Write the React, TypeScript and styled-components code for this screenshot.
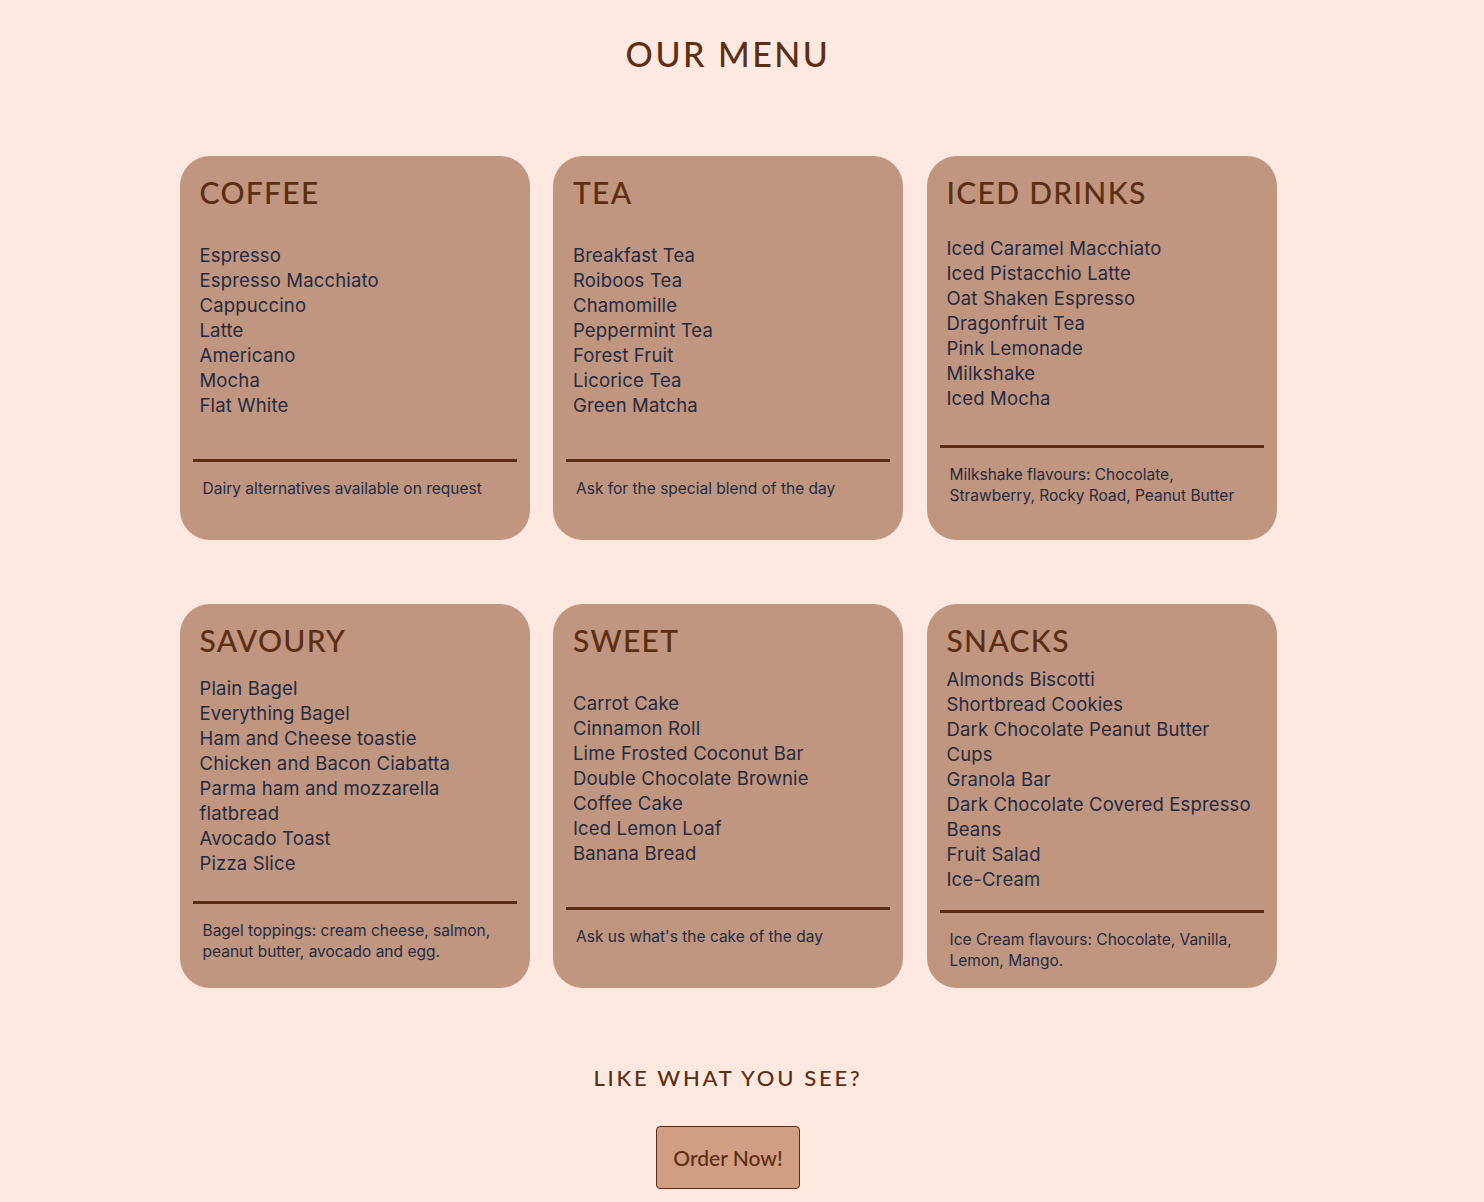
import React from "react";
import styled, { createGlobalStyle } from "styled-components";

const GlobalStyle = createGlobalStyle`
  html, body {
    background: #fde9df;
  }
  body {
    margin: 8px;
    font-family: "Inter", "Liberation Sans", sans-serif;
  }
  * { box-sizing: border-box; }
`;

const Page = styled.main`
  width: 1440px;
  display: flex;
  flex-direction: column;
  align-items: center;
`;

const Title = styled.h1`
  margin: 29px 0 0;
  font-family: "Lato", "Liberation Sans", sans-serif;
  font-weight: 500;
  font-size: 34px;
  line-height: 1;
  letter-spacing: 2.5px;
  color: #5c2e12;
`;

const Grid = styled.section`
  margin-top: 85px;
  display: grid;
  grid-template-columns: repeat(3, 350px);
  grid-auto-rows: 384px;
  column-gap: 23.5px;
  row-gap: 64px;
`;

const Card = styled.article`
  display: flex;
  flex-direction: column;
  height: 384px;
  padding: 0 13px;
  background: #c09680;
  border-radius: 30px;
`;

const CardTitle = styled.h2`
  margin: 0;
  height: 46px;
  padding: 21px 0 0 7px;
  font-family: "Lato", "Liberation Sans", sans-serif;
  font-weight: 500;
  font-size: 30px;
  line-height: 1;
  letter-spacing: 1.3px;
  color: #5c2e12;
`;

const CardBody = styled.div`
  flex: 1;
  display: flex;
  flex-direction: column;
  justify-content: space-evenly;
`;

const ItemList = styled.ul`
  margin: 0;
  padding: 0 10px 0 7px;
  list-style: none;
`;

const Item = styled.li`
  font-size: 18.5px;
  line-height: 25px;
  letter-spacing: 0.15px;
  color: #262a3f;
`;

const Bottom = styled.div`
  display: flex;
  flex-direction: column;
`;

const Divider = styled.hr`
  margin: 0;
  border: none;
  height: 3px;
  background: #5a2d13;
`;

const Note = styled.p`
  margin: 16px 0 0;
  padding: 0 10px;
  font-size: 15.5px;
  line-height: 21px;
  color: #262a3f;
`;

const Cta = styled.h3`
  margin: 79px 0 0;
  font-family: "Lato", "Liberation Sans", sans-serif;
  font-weight: 500;
  font-size: 22px;
  line-height: 1;
  letter-spacing: 2.7px;
  color: #5c2e12;
`;

const OrderButton = styled.button`
  margin-top: 37px;
  width: 144px;
  height: 63px;
  background: #d19e83;
  border: 1px solid #5c2e12;
  border-radius: 4px;
  font-family: "Lato", "Liberation Sans", sans-serif;
  font-size: 21px;
  font-weight: 500;
  color: #5c2e12;
  cursor: pointer;
`;

type Section = { title: string; items: string[]; note: string };

const sections: Section[] = [
  {
    title: "COFFEE",
    items: ["Espresso", "Espresso Macchiato", "Cappuccino", "Latte", "Americano", "Mocha", "Flat White"],
    note: "Dairy alternatives available on request",
  },
  {
    title: "TEA",
    items: ["Breakfast Tea", "Roiboos Tea", "Chamomille", "Peppermint Tea", "Forest Fruit", "Licorice Tea", "Green Matcha"],
    note: "Ask for the special blend of the day",
  },
  {
    title: "ICED DRINKS",
    items: [
      "Iced Caramel Macchiato",
      "Iced Pistacchio Latte",
      "Oat Shaken Espresso",
      "Dragonfruit Tea",
      "Pink Lemonade",
      "Milkshake",
      "Iced Mocha",
    ],
    note: "Milkshake flavours: Chocolate, Strawberry, Rocky Road, Peanut Butter",
  },
  {
    title: "SAVOURY",
    items: [
      "Plain Bagel",
      "Everything Bagel",
      "Ham and Cheese toastie",
      "Chicken and Bacon Ciabatta",
      "Parma ham and mozzarella flatbread",
      "Avocado Toast",
      "Pizza Slice",
    ],
    note: "Bagel toppings: cream cheese, salmon, peanut butter, avocado and egg.",
  },
  {
    title: "SWEET",
    items: [
      "Carrot Cake",
      "Cinnamon Roll",
      "Lime Frosted Coconut Bar",
      "Double Chocolate Brownie",
      "Coffee Cake",
      "Iced Lemon Loaf",
      "Banana Bread",
    ],
    note: "Ask us what's the cake of the day",
  },
  {
    title: "SNACKS",
    items: [
      "Almonds Biscotti",
      "Shortbread Cookies",
      "Dark Chocolate Peanut Butter Cups",
      "Granola Bar",
      "Dark Chocolate Covered Espresso Beans",
      "Fruit Salad",
      "Ice-Cream",
    ],
    note: "Ice Cream flavours: Chocolate, Vanilla, Lemon, Mango.",
  },
];

export default function App() {
  return (
    <>
      <GlobalStyle />
      <Page>
        <Title>OUR MENU</Title>
        <Grid>
          {sections.map((s) => (
            <Card key={s.title}>
              <CardTitle>{s.title}</CardTitle>
              <CardBody>
                <ItemList>
                  {s.items.map((it) => (
                    <Item key={it}>{it}</Item>
                  ))}
                </ItemList>
                <Bottom>
                  <Divider />
                  <Note>{s.note}</Note>
                </Bottom>
              </CardBody>
            </Card>
          ))}
        </Grid>
        <Cta>LIKE WHAT YOU SEE?</Cta>
        <OrderButton>Order Now!</OrderButton>
      </Page>
    </>
  );
}
